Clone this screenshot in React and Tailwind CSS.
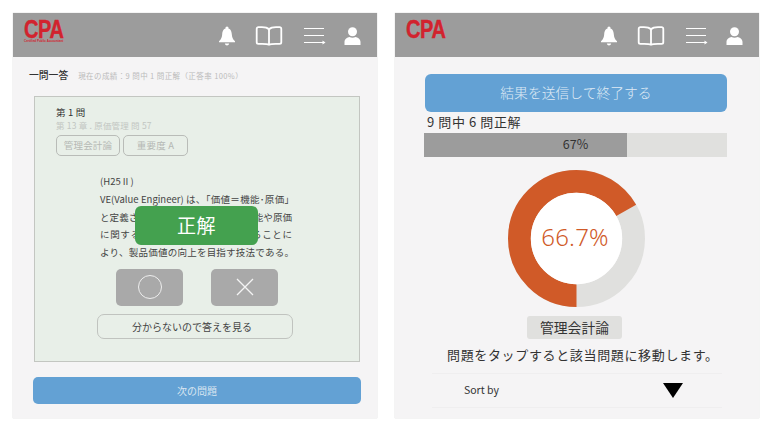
import React from "react";

const jp = "font-['Noto_Sans_CJK_JP','Noto_Sans',sans-serif]";

function Bell() {
  return (
    <svg width="18" height="20" viewBox="0 0 18 20" fill="#fff">
      <circle cx="9" cy="2" r="1.6" />
      <path d="M9 2.2c-3.4 0-4.6 2.8-4.8 6-.2 2.8-.9 5-3.2 7v1h16v-1c-2.3-2-3-4.200-3.200-7-.2-3.200-1.400-6-4.800-6z" />
      <path d="M6.800 17.400h4.400c-.3 1.300-1.100 2-2.200 2s-1.900-.7-2.200-2z" />
    </svg>
  );
}

function Book() {
  return (
    <svg width="28" height="20" viewBox="0 0 28 20" fill="none" stroke="#fff" strokeWidth="1.800">
      <path d="M14 3.300C12.500 1.800 10 1.200 7 1.200H3.400c-1 0-1.700.7-1.700 1.700v13.400c0 1 .7 1.600 1.700 1.600H7c3 0 5.500.1 7 .9 1.500-.8 4-.9 7-.9h3.600c1 0 1.700-.6 1.700-1.600V2.900c0-1-.7-1.700-1.700-1.700H21c-3 0-5.500.6-7 2.100z" />
      <path d="M14 3.300v15.500" />
    </svg>
  );
}

function MenuArrow() {
  return (
    <svg width="23" height="18" viewBox="0 0 23 18" fill="none" stroke="#fff" strokeWidth="1.200">
      <path d="M1 1.500h20M1 8.500h20M1 15.500h20" />
      <path d="M19.500 13.500l3 2-3 2z" fill="#fff" stroke="none" />
    </svg>
  );
}

function User() {
  return (
    <svg width="17" height="18" viewBox="0 0 17 18" fill="#fff">
      <circle cx="8.500" cy="4.700" r="4.500" />
      <path d="M0.500 18v-3c0-3 2.800-4.800 5-5 1.800 1 4.200 1 6 0 2.200.2 5 2 5 5v3z" />
    </svg>
  );
}

function Header({ sub }) {
  return (
    <header className="h-[44px] bg-[#9c9c9c] flex items-center shrink-0 pl-[11px]">
      <div className="w-[40px] h-[24px] -mt-[6px] flex flex-col items-start">
        <span className="font-['Liberation_Sans',sans-serif] font-bold text-[#d2232e] text-[25px] leading-[19px] tracking-[-0.5px] origin-left scale-x-[0.8] [-webkit-text-stroke:0.4px_#d2232e]">CPA</span>
        {sub && (
          <span className="font-['Liberation_Sans',sans-serif] font-bold text-[#d2232e] text-[3px] leading-[4px] whitespace-nowrap">Certified Public Accountant</span>
        )}
      </div>
      <div className="ml-[154px] mt-[2px] flex items-center">
        <Bell />
        <div className="ml-[19px]"><Book /></div>
        <div className="ml-[20px]"><MenuArrow /></div>
        <div className="ml-[18px]"><User /></div>
      </div>
    </header>
  );
}

function QuizScreen() {
  const line = "text-justify [text-align-last:justify] whitespace-nowrap";
  return (
    <section className="w-[364px] h-[405px] bg-[#f5f4f5] flex flex-col shadow-[0_0_1px_#bbb]">
      <Header sub />
      <div className="flex items-center h-[36px] pl-[16px] pt-[1px]">
        <span className="text-[9.800px] font-medium text-[#333]">一問一答</span>
        <span className="ml-[10px] text-[7.500px] text-[#bbb] tracking-[0.4px]">現在の成績：9 問中 1 問正解（正答率 100%）</span>
      </div>
      <div className="relative mx-[21px] mt-[3px] w-[326px] h-[266px] bg-[#e8efe8] border border-[#c3c6c1] pt-[9px] pl-[21px]">
        <div className="text-[9.500px] leading-[12px] text-[#333] tracking-[0.2px]">第 1 問</div>
        <div className="text-[8.500px] leading-[12px] mt-[1px] text-[#c2c6c2] tracking-[0.2px]">第 13 章 . 原価管理 問 57</div>
        <div className="flex gap-[3px] mt-[4px]">
          <span className="w-[64px] h-[21px] rounded-[5px] border border-[#b9bcb8] text-[9.500px] text-[#b5b8b4] flex items-center justify-center tracking-[0.2px]">管理会計論</span>
          <span className="w-[65px] h-[21px] rounded-[5px] border border-[#b9bcb8] text-[9.500px] text-[#b5b8b4] flex items-center justify-center tracking-[0.2px]">重要度 A</span>
        </div>
        <div className="ml-[44px] mt-[17px] w-[194px] text-[9.500px] leading-[17.800px] text-[#444]">
          <div>(H25 II )</div>
          <div className={line}>VE(Value Engineer) は、「価値＝機能･原価」</div>
          <div className={`${line} w-[192px]`}>と定義される。製品やサービスの機能や原価</div>
          <div className={`${line} w-[192px]`}>に関する分析を組織的に体系化することに</div>
          <div className={line}>より、製品価値の向上を目指す技法である。</div>
        </div>
        <div className="flex ml-[60px] mt-[7px] gap-[28px]">
          <button className="w-[67px] h-[37px] rounded-[5px] bg-[#a9a9a9] flex items-center justify-center">
            <svg width="26" height="26" viewBox="0 0 26 26" fill="none" stroke="#eee" strokeWidth="1"><circle cx="13" cy="13" r="11.500" /></svg>
          </button>
          <button className="w-[67px] h-[37px] rounded-[5px] bg-[#a9a9a9] flex items-center justify-center">
            <svg width="20" height="20" viewBox="0 0 20 20" fill="none" stroke="#f4f4f4" strokeWidth="1.300"><path d="M2 2l16 16M18 2L2 18" /></svg>
          </button>
        </div>
        <button className="block ml-[41px] mt-[8px] w-[196px] h-[25px] pr-[6px] rounded-[7px] border border-[#c0c3bf] text-[10px] text-[#444]">分からないので答えを見る</button>
        <div className="absolute left-[100px] top-[109px] w-[123px] h-[39px] rounded-[6px] bg-[#44a14f] text-white text-[19px] flex items-center justify-center tracking-[0.5px]">正解</div>
      </div>
      <button className="mx-[20px] mt-[15px] w-[328px] h-[27px] rounded-[5px] bg-[#63a1d4] text-[#dbe7f2] text-[10px]">次の問題</button>
    </section>
  );
}

// donut: orange runs from 6 o'clock clockwise round to about 2 o'clock
function Donut() {
  const r = 57.500;
  const c = 2 * Math.PI * r;
  return (
    <svg width="137" height="137" viewBox="0 0 138 138" className="block">
      <circle cx="69" cy="69" r={r} fill="none" stroke="#e0e0de" strokeWidth="23" />
      <circle cx="69" cy="69" r={r} fill="none" stroke="#d05a28" strokeWidth="23" strokeDasharray={`${c * 0.667} ${c}`} transform="rotate(90 69 69)" />
      <circle cx="69" cy="69" r="46" fill="#fff" />
    </svg>
  );
}

function ResultScreen() {
  return (
    <section className="w-[364px] h-[405px] bg-[#f5f4f5] flex flex-col shadow-[0_0_1px_#bbb]">
      <Header />
      <button className="ml-[30px] mt-[17px] w-[302px] h-[37.500px] rounded-[6px] bg-[#63a1d4] text-[#dfeaf4] text-[13.800px] font-light shrink-0">結果を送信して終了する</button>
      <div className="ml-[32px] text-[13px] leading-[20px] text-[#333] tracking-[0.600px]">9 問中 6 問正解</div>
      <div className="relative ml-[29px] mt-[1px] w-[303px] h-[24px] bg-[#e0e0de] shrink-0">
        <div className="h-full w-[67%] bg-[#9c9c9c]" />
        <span className="absolute inset-0 flex items-center justify-center text-[12.500px] text-[#333]">67%</span>
      </div>
      <div className="relative ml-[113px] mt-[13px] w-[137px] h-[137px] shrink-0">
        <Donut />
        <span className="absolute inset-0 flex items-center justify-center text-[#d05a28] text-[24px] tracking-[0.2px] font-['Noto_Sans',sans-serif] font-light -ml-[3px] -mt-[2px]">66.7%</span>
      </div>
      <div className="ml-[132px] mt-[9px] w-[95px] h-[23px] rounded-[3px] bg-[#e0e0de] flex items-center justify-center text-[13.800px] text-[#333] shrink-0">管理会計論</div>
      <div className="ml-[52px] mt-[6px] text-[13px] leading-[20px] text-[#333] tracking-[0.650px] whitespace-nowrap">問題をタップすると該当問題に移動します。</div>
      <div className="mx-[37px] mt-[8px] h-[35px] border-y border-[#efeeef] flex items-center justify-between pl-[32px] pr-[39px] shrink-0">
        <span className="text-[10.500px] text-[#333]">Sort by</span>
        <svg width="20" height="15" viewBox="0 0 20 15" fill="#000"><path d="M0 0h20L10 15z" /></svg>
      </div>
    </section>
  );
}

export default function App() {
  return (
    <div className={`w-[768px] h-[430px] bg-white flex gap-[18px] pl-[13px] pt-[13px] overflow-hidden ${jp}`}>
      <QuizScreen />
      <ResultScreen />
    </div>
  );
}
